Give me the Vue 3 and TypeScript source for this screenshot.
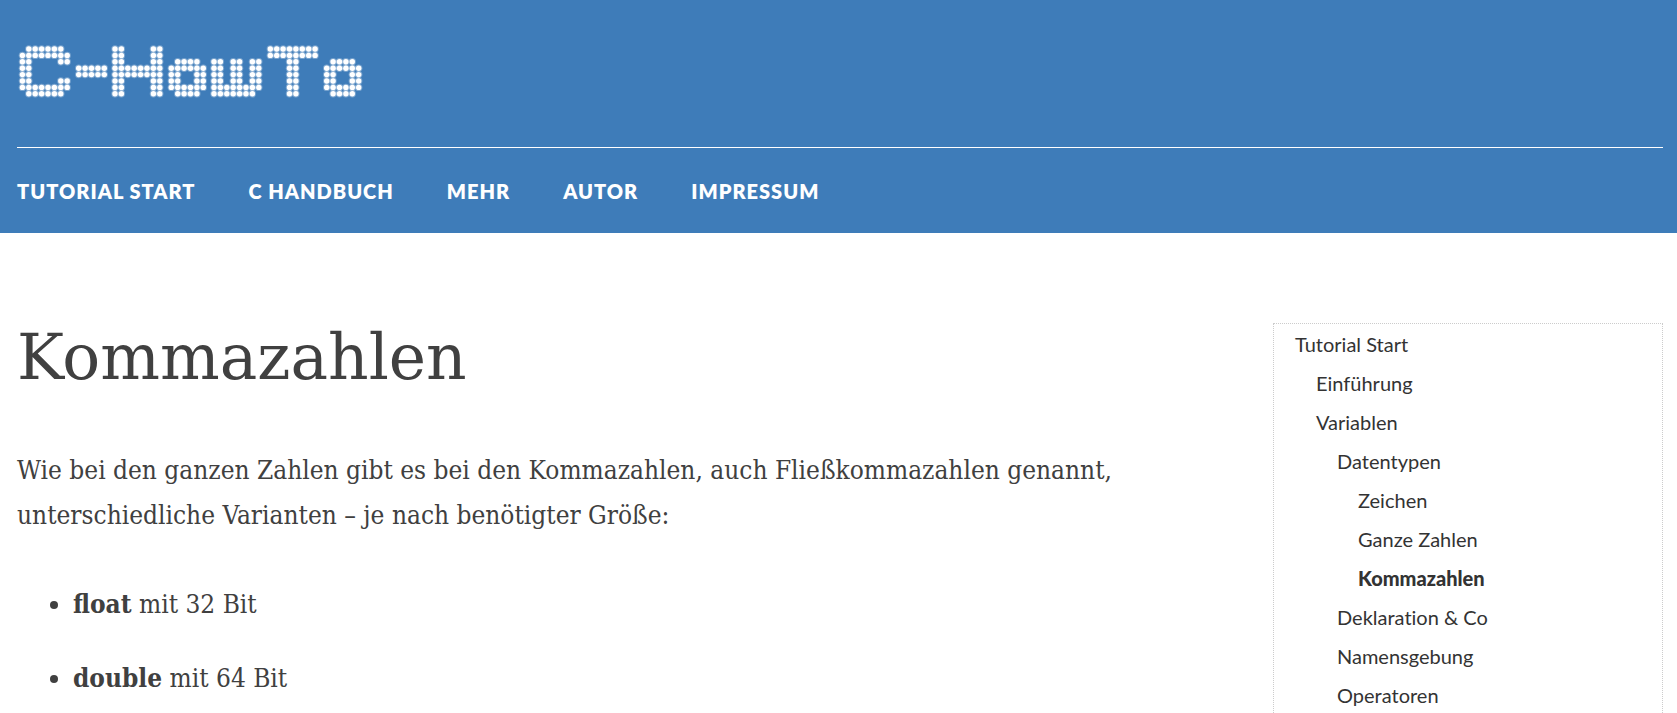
<script setup lang="ts">
interface Glyph { x: number; rows: string[] }
interface Entry { label: string; level: number; current?: boolean }

const blank = '........'
const roundLetter = [blank, blank, '.XXXX.', 'XXXXXX', 'XX..XX', 'XX..XX', 'XXXXXX', '.XXXX.']
const glyphs: Glyph[] = [
  { x: 5.4, rows: ['.XXXXXX.', 'XXXXXXXX', 'XX....XX', 'XX', 'XX', 'XX....XX', 'XXXXXXXX', '.XXXXXX.'] },
  { x: 61.7, rows: [blank, blank, blank, 'XXXXX', 'XXXXX', blank, blank, blank] },
  { x: 98, rows: ['XX....XX', 'XX....XX', 'XX....XX', 'XXXXXXXX', 'XXXXXXXX', 'XX....XX', 'XX....XX', 'XX....XX'] },
  { x: 154.3, rows: roundLetter },
  { x: 197, rows: [blank, blank, 'XX.XX.XX', 'XX.XX.XX', 'XX.XX.XX', 'XX.XX.XX', 'XXXXXXXX', 'XXXXXXX.'] },
  { x: 253.3, rows: ['XXXXXXXX', 'XXXXXXXX', '...XX', '...XX', '...XX', '...XX', '...XX', '...XX'] },
  { x: 309.7, rows: roundLetter },
]
const pitch = 6.4
const dots = glyphs.flatMap(g =>
  g.rows.flatMap((row, r) =>
    [...row].flatMap((c, i) => (c === 'X' ? [{ x: g.x + i * pitch, y: 5 + r * pitch }] : [])),
  ),
)

const menu = ['Tutorial Start', 'C Handbuch', 'Mehr', 'Autor', 'Impressum']
const entries: Entry[] = [
  { label: 'Tutorial Start', level: 0 },
  { label: 'Einführung', level: 1 },
  { label: 'Variablen', level: 1 },
  { label: 'Datentypen', level: 2 },
  { label: 'Zeichen', level: 3 },
  { label: 'Ganze Zahlen', level: 3 },
  { label: 'Kommazahlen', level: 3, current: true },
  { label: 'Deklaration & Co', level: 2 },
  { label: 'Namensgebung', level: 2 },
  { label: 'Operatoren', level: 2 },
]
</script>

<template>
  <div class="page">
    <header class="header">
      <a class="logo" href="#" aria-label="C-HowTo">
        <svg width="348" height="55" viewBox="0 0 348 55" aria-hidden="true">
          <g v-for="(d, i) in dots" :key="i" fill="#fff">
            <circle :cx="d.x" :cy="d.y" r="3.7" opacity="0.3" />
            <circle :cx="d.x" :cy="d.y" r="2.7" />
          </g>
        </svg>
      </a>
      <nav class="nav">
        <a v-for="item in menu" :key="item" href="#">{{ item }}</a>
      </nav>
    </header>
    <div class="content">
      <main class="article">
        <h1>Kommazahlen</h1>
        <p>
          Wie bei den ganzen Zahlen gibt es bei den Kommazahlen, auch Fließkommazahlen genannt,
          unterschiedliche Varianten – je nach benötigter Größe:
        </p>
        <ul>
          <li><strong>float</strong> mit 32 Bit</li>
          <li><strong>double</strong> mit 64 Bit</li>
        </ul>
      </main>
      <aside class="sidebar">
        <ul>
          <li v-for="e in entries" :key="e.label" :class="'level-' + e.level">
            <a href="#" :class="{ current: e.current }">{{ e.label }}</a>
          </li>
        </ul>
      </aside>
    </div>
  </div>
</template>

<style>
html,
body {
  background: #fff;
}
</style>

<style scoped>
.page {
  color: #404040;
  font-family: "DejaVu Serif Condensed", "DejaVu Serif", serif;
  font-size: 26px;
  line-height: 45px;
  height: 100vh;
  overflow: hidden;
}
.header {
  background: #3e7cb9;
  padding: 44px 14px 0 17px;
}
.logo {
  display: block;
  padding-bottom: 48px;
}
.logo svg {
  display: block;
}
.nav {
  border-top: 1px solid #fff;
  display: flex;
  gap: 53px;
  padding: 21px 0 19px;
}
.nav a {
  color: #fff;
  font: 800 20px/45px Lato, sans-serif;
  letter-spacing: 1px;
  text-decoration: none;
  text-transform: uppercase;
}
.content {
  align-items: flex-start;
  display: flex;
  gap: 96px;
  padding: 90px 14px 0 17px;
}
.article {
  flex: 1;
  min-width: 0;
}
h1 {
  font-family: "DejaVu Serif", serif;
  font-size: 63px;
  font-weight: 400;
  line-height: 70px;
  margin: 0 0 55px;
}
p {
  margin: 0 0 44px;
}
.article ul {
  margin: 0;
  padding-left: 56px;
}
.article li {
  margin-bottom: 29px;
}
.sidebar {
  border: 1px dotted #ccc;
  box-sizing: border-box;
  flex: 0 0 390px;
}
.sidebar ul {
  list-style: none;
  margin: 0;
  padding: 1px 21px;
}
.sidebar a {
  color: #333;
  display: block;
  font: 400 20px/39px Lato, sans-serif;
  font-variant-ligatures: none;
  text-decoration: none;
}
.sidebar .current {
  font-weight: 900;
}
.sidebar .level-1 {
  padding-left: 21px;
}
.sidebar .level-2 {
  padding-left: 42px;
}
.sidebar .level-3 {
  padding-left: 63px;
}
</style>
